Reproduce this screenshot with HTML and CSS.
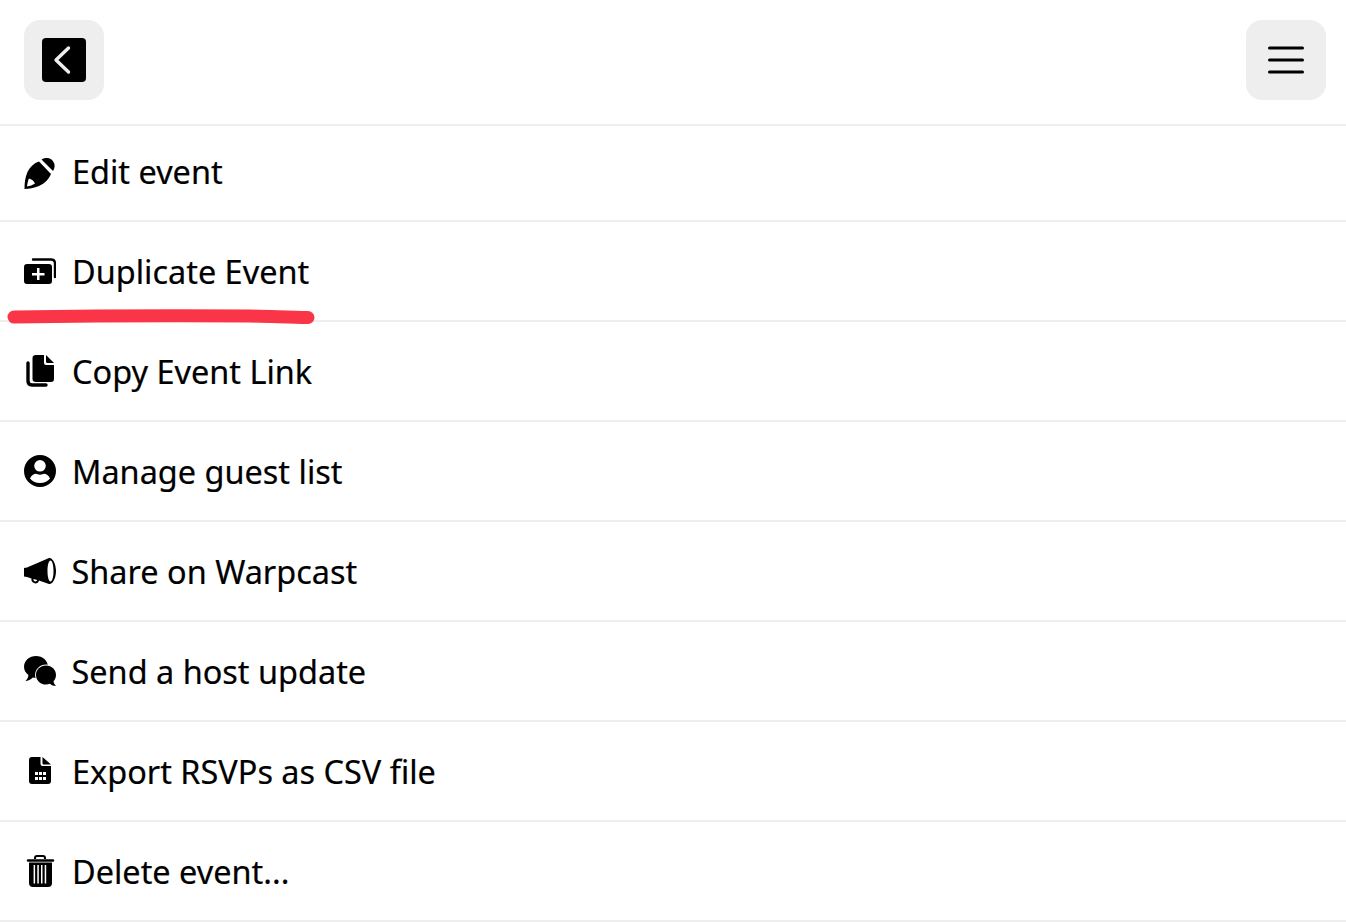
FILE: index.html
```html
<!DOCTYPE html>
<html lang="en">
<head>
  <meta charset="UTF-8">
  <title>Event menu</title>
  <link rel="stylesheet" href="styles.css">
</head>
<body>

  <header class="top-bar">
    <button class="square-btn">
      <svg width="44" height="44" viewBox="0 0 44 44"><rect width="44" height="44" rx="4" fill="#000"/><path d="M26.500 10 L14 22 L26.500 34" fill="none" stroke="#eee" stroke-width="3.400" stroke-linecap="round" stroke-linejoin="round"/></svg>
    </button>
    <button class="square-btn">
      <svg width="36" height="30" viewBox="0 0 36 30"><path d="M1.500 3h33M1.500 15h33M1.500 27h33" fill="none" stroke="#000" stroke-width="3" stroke-linecap="round"/></svg>
    </button>
  </header>

  <ul class="menu">
    <li class="menu-item first">
      <svg class="icon" viewBox="0 0 32 32"><path fill-rule="evenodd" d="M15 4.500 L27 17 C25 22 20 27 15 29 C10 31 5 32 0.500 32 C0.500 26 1 21 3.500 15 C6 10 10 6 15 4.500Z M3 29.500 C3.500 26 4 23.500 5 21.500 C7.500 22 10 24 11 26.500 C8.500 28 6 29 3 29.500Z" fill="#000"/><path d="M17.500 2.500 C21 0.500 25 0.500 28 3 C31 6 31.500 10 29 14Z" fill="#000"/></svg>
      <span>Edit event</span>
    </li>
    <li class="menu-item">
      <svg class="icon" viewBox="0 0 32 32"><path d="M9 4.500 H27 Q31 4.500 31 8.500 V22" fill="none" stroke="#000" stroke-width="2.400" stroke-linecap="round"/><path fill-rule="evenodd" d="M3 9 H25 Q28 9 28 12 V26 Q28 29 25 29 H3 Q0 29 0 26 V12 Q0 9 3 9Z M13 13 V18 H8 V20.500 H13 V25 H15.500 V20.500 H20.500 V18 H15.500 V13Z" fill="#000"/></svg>
      <span>Duplicate Event</span>
    </li>
    <li class="menu-item">
      <svg class="icon" viewBox="0 0 32 32"><path d="M4 8 V26 Q4 30 8 30 H22" fill="none" stroke="#000" stroke-width="3.400" stroke-linecap="round"/><path fill-rule="evenodd" d="M12 0 H20 V8 Q20 10 22 10 H30 V24 Q30 27 27 27 H12 Q8.500 27 8.500 24 V3 Q8.500 0 12 0Z" fill="#000"/><path d="M22 0 L30 8 H23.500 Q22 8 22 6.500Z" fill="#000"/></svg>
      <span>Copy Event Link</span>
    </li>
    <li class="menu-item">
      <svg class="icon" viewBox="0 0 32 32"><path fill-rule="evenodd" d="M16 0 A16 16 0 1 0 16 32 A16 16 0 1 0 16 0Z M16 5 A5.800 5.800 0 1 1 16 16.600 A5.800 5.800 0 1 1 16 5Z M16 28 C11.500 28 8 26 6 23.500 C7 20.500 10 18.800 12 18.800 C13 18.800 14 19.800 16 19.800 C18 19.800 19 18.800 20 18.800 C22 18.800 25 20.500 26 23.500 C24 26 20.500 28 16 28Z" fill="#000"/></svg>
      <span>Manage guest list</span>
    </li>
    <li class="menu-item shifted">
      <svg class="icon" viewBox="0 0 32 32"><path fill-rule="evenodd" d="M0 13 L3 12.500 L25 3 C28 2 32 8 32 16 C32 24 28 30 25 29 L15 25.500 C14.500 28 12 29 10 28 C8 27.500 7 25.500 7.500 23.500 L3 22 L0 21.500Z M26.500 5.500 C24.800 5.500 23.500 10 23.500 16 C23.500 22 24.800 26.500 26.500 26.500 C28.200 26.500 29.500 22 29.500 16 C29.500 10 28.200 5.500 26.500 5.500Z M9.500 24 C9.200 25.200 10 26.200 11 26.400 C12 26.600 13 26 13.200 25 Z" fill="#000"/></svg>
      <span>Share on Warpcast</span>
    </li>
    <li class="menu-item shifted">
      <svg class="icon" viewBox="0 0 32 32"><path d="M12 1 C18.500 1 24 5.500 24 12 C24 18.500 18.500 23 12 23 C10.800 23 9.800 22.900 8.800 22.600 C6.800 24.800 4 26 1.500 26 C3.500 24 4.300 22 4.400 20 C1.800 18 0 15.300 0 12 C0 5.500 5.500 1 12 1Z" fill="#000"/><path d="M22 10.500 C27.800 10.500 32 14.800 32 20 C32 22.500 31 24.600 29.500 26.300 C29.800 28 30.500 29.500 32 31 C29.500 31 27.500 30.200 26 28.800 C24.700 29.300 23.400 29.600 22 29.600 C16.200 29.600 12 25.300 12 20 C12 14.800 16.200 10.500 22 10.500Z" fill="#000" stroke="#fff" stroke-width="1.800" paint-order="stroke"/></svg>
      <span>Send a host update</span>
    </li>
    <li class="menu-item">
      <svg class="icon" viewBox="0 0 32 32"><path fill-rule="evenodd" d="M8 2 H16.500 V9 Q16.500 11 18.500 11 H27 V26 Q27 29 24 29 H8 Q5 29 5 26 V5 Q5 2 8 2Z M11 17 V20 H14 V17Z M15 17 V20 H18 V17Z M19 17 V20 H22 V17Z M11 22 V25 H14 V22Z M15 22 V25 H18 V22Z M19 22 V25 H22 V22Z" fill="#000"/><path d="M18.500 2 L27 9.500 H19.500 Q18.500 9.500 18.500 8.500Z" fill="#000"/></svg>
      <span>Export RSVPs as CSV file</span>
    </li>
    <li class="menu-item">
      <svg class="icon" viewBox="0 0 32 32"><path d="M4 5.500 H29" fill="none" stroke="#000" stroke-width="2.400" stroke-linecap="round"/><path d="M11 4 V3 Q11 1 13 1 H19 Q21 1 21 3 V4" fill="none" stroke="#000" stroke-width="2"/><path fill-rule="evenodd" d="M5 7.500 H28 V28 Q28 32 24 32 H9 Q5 32 5 28Z M9.600 10 V28.500 H11.100 V10Z M13.300 10 V28.500 H14.800 V10Z M17 10 V28.500 H18.500 V10Z M20.700 10 V28.500 H22.200 V10Z" fill="#000"/></svg>
      <span>Delete event...</span>
    </li>
  </ul>

  <svg class="scribble" width="320" height="20" viewBox="0 0 320 20"><path d="M14 10 C80 9 180 8.500 250 9 C275 9.500 290 10.500 308 10.500" fill="none" stroke="#fb3548" stroke-width="13" stroke-linecap="round"/></svg>

</body>
</html>
```

FILE: styles.css
```css
html, body { margin: 0; padding: 0; }
body { font-family: "Noto Sans", sans-serif; background-color: #fff; color: #000; position: relative; overflow: hidden; height: 922px; }
.top-bar { display: flex; justify-content: space-between; align-items: flex-start; height: 104px; padding: 20px 20px 0 24px; border-bottom: 2px solid #eee; }
.square-btn { width: 80px; height: 80px; display: flex; align-items: center; justify-content: center; padding: 0; margin: 0; background-color: #eee; border: none; border-radius: 16px; }
.menu { list-style: none; margin: 0; padding: 0; }
.menu-item { display: flex; align-items: center; gap: 16px; height: 98px; padding-left: 24px; border-bottom: 2px solid #eee; font-size: 32.450px; line-height: 44px; -webkit-text-stroke: 0.2px #000; }
.menu-item span { padding-top: 2px; }
.menu-item.first span { padding-top: 0; padding-bottom: 2px; }
.menu-item.first { height: 94px; }
.menu-item.shifted { gap: 15.500px; }
.icon { width: 32px; height: 32px; flex: none; }
.scribble { position: absolute; left: 0; top: 306.500px; }
```
